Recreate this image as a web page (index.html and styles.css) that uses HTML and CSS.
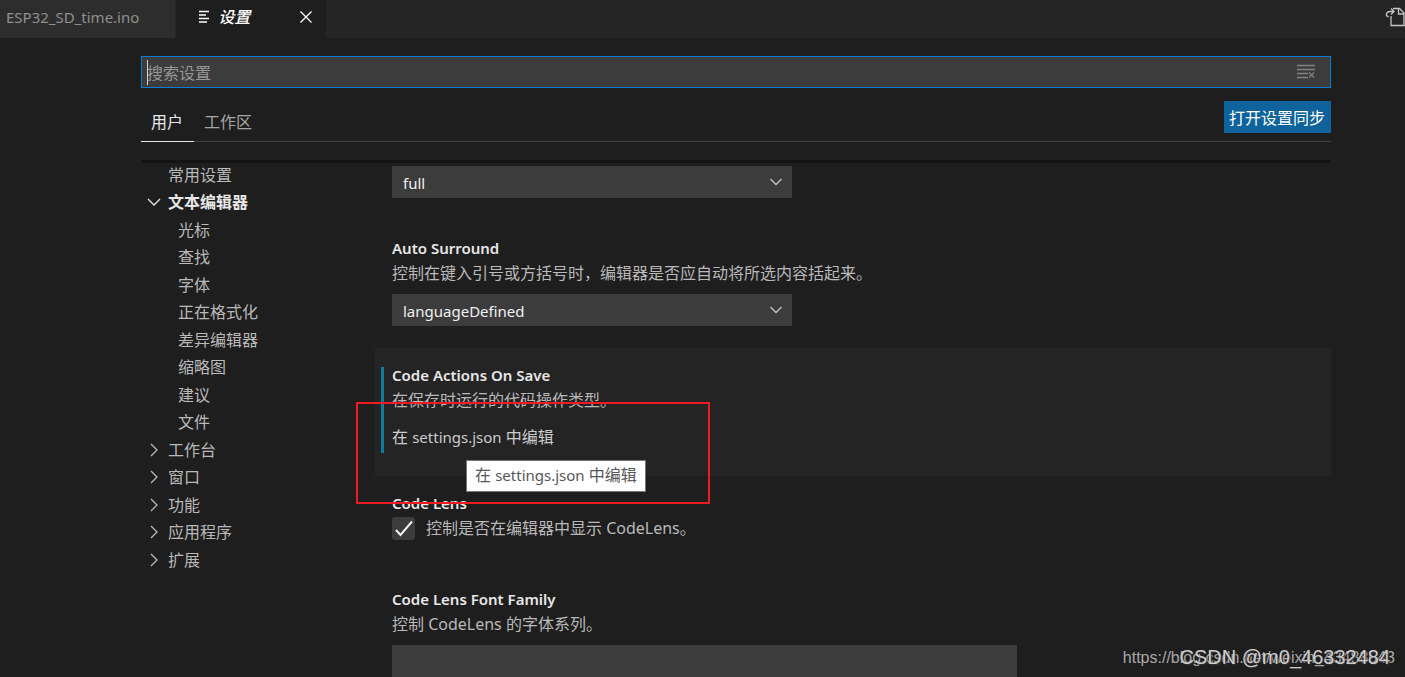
FILE: index.html
```html
<!DOCTYPE html>
<html lang="zh-CN">
<head>
<meta charset="utf-8">
<title>设置</title>
<link rel="stylesheet" href="styles.css">
</head>
<body>
<div class="window">
  <header class="tabbar">
    <button class="tab" type="button">ESP32_SD_time.ino</button>
    <div class="tab tab-active">
      <svg class="icon" width="16" height="16" viewBox="0 0 16 16" aria-hidden="true"><path d="M3 2.500h10M3 6h7M3 9.500h10M3 13h8" /></svg>
      <span class="tab-title">设置</span>
      <button class="tab-close" type="button" aria-label="关闭"><svg class="icon" width="14" height="14" viewBox="0 0 14 14"><path d="M1.500 1.500l11 11M12.500 1.500l-11 11" /></svg></button>
    </div>
    <button class="open-json" type="button" aria-label="打开设置(json)"><svg class="icon" width="20" height="20" viewBox="0 0 20 20"><path d="M8 1.500h6.500l4.500 4.500v12.500H6V9M13.500 1.500v5.500H19M3.500 10Q.5 8.500 1.500 6.500T5 4.500h4M6 1.500L9 4.500L6 7.500" /></svg></button>
  </header>

  <main class="settings">
    <div class="search">
      <input class="search-input" type="text" placeholder="搜索设置" aria-label="搜索设置">
      <span class="caret"></span>
      <button class="clear" type="button" aria-label="清除"><svg class="icon" width="20" height="16" viewBox="0 0 20 16"><path d="M1 1.500h18M1 5.500h18M1 9.500h11M1 13.500h11M13 8.500l5 5M18 8.500l-5 5" /></svg></button>
    </div>

    <div class="scopes">
      <button class="scope scope-active" type="button">用户</button>
      <button class="scope" type="button">工作区</button>
      <button class="sync" type="button">打开设置同步</button>
    </div>

    <div class="body">
      <nav class="tree" aria-label="设置目录">
        <a class="node" href="#"><span class="twist"></span>常用设置</a>
        <a class="node node-open" href="#"><svg class="icon twist" width="16" height="16" viewBox="0 0 16 16"><path d="M2 5l6 6l6-6" /></svg>文本编辑器</a>
        <a class="node child" href="#">光标</a>
        <a class="node child" href="#">查找</a>
        <a class="node child" href="#">字体</a>
        <a class="node child" href="#">正在格式化</a>
        <a class="node child" href="#">差异编辑器</a>
        <a class="node child" href="#">缩略图</a>
        <a class="node child" href="#">建议</a>
        <a class="node child" href="#">文件</a>
        <a class="node" href="#"><svg class="icon twist" width="16" height="16" viewBox="0 0 16 16"><path d="M5 2l6 6l-6 6" /></svg>工作台</a>
        <a class="node" href="#"><svg class="icon twist" width="16" height="16" viewBox="0 0 16 16"><path d="M5 2l6 6l-6 6" /></svg>窗口</a>
        <a class="node" href="#"><svg class="icon twist" width="16" height="16" viewBox="0 0 16 16"><path d="M5 2l6 6l-6 6" /></svg>功能</a>
        <a class="node" href="#"><svg class="icon twist" width="16" height="16" viewBox="0 0 16 16"><path d="M5 2l6 6l-6 6" /></svg>应用程序</a>
        <a class="node" href="#"><svg class="icon twist" width="16" height="16" viewBox="0 0 16 16"><path d="M5 2l6 6l-6 6" /></svg>扩展</a>
      </nav>

      <div class="list">
        <section class="item item-first">
          <div class="select-wrap">
            <select class="select" aria-label="Auto Indent"><option>full</option></select>
            <svg class="icon chevron" width="16" height="16" viewBox="0 0 16 16" aria-hidden="true"><path d="M2.500 5l5.500 5.500l5.500-5.500" /></svg>
          </div>
        </section>

        <section class="item">
          <label class="name" for="surround">Auto Surround</label>
          <p class="desc">控制在键入引号或方括号时，编辑器是否应自动将所选内容括起来。</p>
          <div class="select-wrap">
            <select class="select" id="surround"><option>languageDefined</option></select>
            <svg class="icon chevron" width="16" height="16" viewBox="0 0 16 16" aria-hidden="true"><path d="M2.500 5l5.500 5.500l5.500-5.500" /></svg>
          </div>
        </section>

        <section class="item item-focus">
          <h2 class="name">Code Actions On Save</h2>
          <p class="desc">在保存时运行的代码操作类型。</p>
          <a class="edit" href="#">在 <span class="file">settings.json</span> 中编辑</a>
          <span class="modified"></span>
          <span class="marker"></span>
          <span class="tooltip" role="tooltip">在 <span class="file">settings.json</span> 中编辑</span>
        </section>

        <section class="item">
          <h2 class="name">Code Lens</h2>
          <div class="check-row">
            <input class="check" type="checkbox" id="lens" checked>
            <svg class="icon tick" width="23" height="23" viewBox="0 0 23 23" aria-hidden="true"><path d="M4 13l4.500 5L20 4.500" /></svg>
            <label class="check-label" for="lens">控制是否在编辑器中显示 CodeLens。</label>
          </div>
        </section>

        <section class="item">
          <label class="name" for="font">Code Lens Font Family</label>
          <p class="desc">控制 CodeLens 的字体系列。</p>
          <input class="text" id="font" type="text">
        </section>
      </div>
    </div>
  </main>

  <span class="watermark watermark-url">https://blog.csdn.net/weixin_43488543</span>
  <span class="watermark watermark-user">CSDN @m0_46332484</span>
</div>
</body>
</html>
```
FILE: styles.css
```css
* {
  box-sizing: border-box;
}

body {
  margin: 0;
  background: #1e1e1e;
  color: #b9b9b9;
  font: 16px/25px "Noto Sans", "Noto Sans CJK SC", sans-serif;
}

button,
input,
select {
  margin: 0;
  padding: 0;
  border: 0;
  border-radius: 0;
  background: none;
  color: inherit;
  font: inherit;
  outline: none;
}

a {
  color: inherit;
  text-decoration: none;
}

.icon {
  display: block;
  flex: none;
  fill: none;
  stroke: currentColor;
  stroke-width: 1.3;
}

.window {
  position: relative;
  display: flex;
  flex-direction: column;
  height: 100vh;
  overflow: hidden;
}

.tabbar {
  display: flex;
  flex: none;
  height: 38px;
  background: #252526;
}

.tab {
  display: flex;
  align-items: center;
  padding: 0 36px 3px 6px;
  border-right: 1px solid #252526;
  background: #2d2d2d;
  color: #8f8f8f;
  font-size: 15px;
}

.tab-active {
  gap: 6px;
  padding: 0 13px 4px 20px;
  background: #1e1e1e;
  color: #ffffff;
  font-size: 16px;
}

.tab-title {
  margin-right: 43px;
  font-style: italic;
  font-weight: 500;
}

.open-json {
  margin: 0 0 5px auto;
  color: #c5c5c5;
}

.settings {
  display: flex;
  flex: 1;
  flex-direction: column;
  min-height: 0;
  padding: 18px 74px 0 141px;
}

.search {
  position: relative;
  display: flex;
  flex: none;
  align-items: center;
  height: 32px;
  padding: 0 14px 0 5px;
  border: 1px solid #007fd4;
  background: #3c3c3c;
}

.search-input {
  flex: 1;
  padding-top: 2px;
}

.search-input::placeholder {
  color: #969696;
  opacity: 1;
}

.caret {
  position: absolute;
  top: 3px;
  left: 5px;
  width: 1px;
  height: 25px;
  background: #d4d4d4;
}

.clear {
  color: #808080;
}

.scopes {
  display: flex;
  flex: none;
  height: 54px;
  padding-top: 13px;
  border-bottom: 1px solid #404040;
}

.scope {
  height: 41px;
  padding: 2px 10px 0;
  color: #a5a5a5;
}

.scope-active {
  padding-right: 11px;
  border-bottom: 1px solid #e7e7e7;
  color: #e7e7e7;
}

.sync {
  height: 32px;
  margin-left: auto;
  padding: 2px 6px 0 5px;
  background: #0e639c;
  color: #ffffff;
}

.body {
  display: flex;
  flex: 1;
  min-height: 0;
  margin-top: 18px;
  border-top: 3px solid #141414;
  overflow: hidden;
}

.tree {
  flex: none;
  width: 234px;
}

.node {
  display: flex;
  align-items: flex-start;
  gap: 6px;
  height: 27px;
  padding-left: 5px;
}

.node:nth-child(even) {
  height: 28px;
}

.twist {
  width: 16px;
  margin-top: 4px;
}

.node-open {
  color: #e7e7e7;
  font-weight: 700;
}

.child {
  padding-left: 37px;
}

.list {
  flex: 1;
}

.item {
  position: relative;
  padding: 15px 17px 22px;
}

.item-first {
  padding-top: 3px;
  padding-bottom: 23px;
}

.item-focus {
  background: #242424;
}

.name {
  display: block;
  margin: 0;
  color: #e7e7e7;
  font-size: 15px;
  font-weight: 600;
  line-height: 25px;
}

.desc {
  margin: 0 0 8px;
}

.select-wrap {
  position: relative;
  width: 400px;
}

.select {
  display: block;
  width: 100%;
  height: 32px;
  padding: 3px 32px 0 11px;
  appearance: none;
  background: #3c3c3c;
  color: #f0f0f0;
  font-size: 15px;
}

.chevron {
  position: absolute;
  top: 8px;
  right: 8px;
  color: #c5c5c5;
  pointer-events: none;
}

.edit {
  display: block;
  color: #cccccc;
  line-height: 33px;
}

.file {
  font-size: 15px;
}

.modified {
  position: absolute;
  top: 19px;
  bottom: 23px;
  left: 6px;
  width: 3px;
  background: #0c7d9d;
}

.marker {
  position: absolute;
  z-index: 3;
  top: 54px;
  left: -19px;
  width: 354px;
  height: 102px;
  border: 2px solid #ed1c24;
}

.tooltip {
  position: absolute;
  z-index: 2;
  top: 112px;
  left: 91px;
  padding: 2px 8px 3px;
  border: 1px solid #767676;
  background: #ffffff;
  color: #575757;
  white-space: nowrap;
}

.check-row {
  position: relative;
  display: flex;
  align-items: center;
  gap: 11px;
  margin-bottom: 9px;
}

.check {
  width: 23px;
  height: 23px;
  appearance: none;
  border-radius: 3px;
  background: #3c3c3c;
}

.tick {
  position: absolute;
  top: 1px;
  left: 0;
  color: #f0f0f0;
  stroke-width: 2;
  pointer-events: none;
}

.text {
  display: block;
  width: 625px;
  height: 32px;
  background: #3c3c3c;
}

.watermark {
  position: absolute;
  right: 10px;
  bottom: 7px;
  color: #a8a8a8;
  font-family: "Liberation Sans", sans-serif;
}

.watermark-user {
  right: 15px;
  color: #cccccc;
  font-size: 20px;
  text-shadow: 1px 1px 1px #333333;
}
```
